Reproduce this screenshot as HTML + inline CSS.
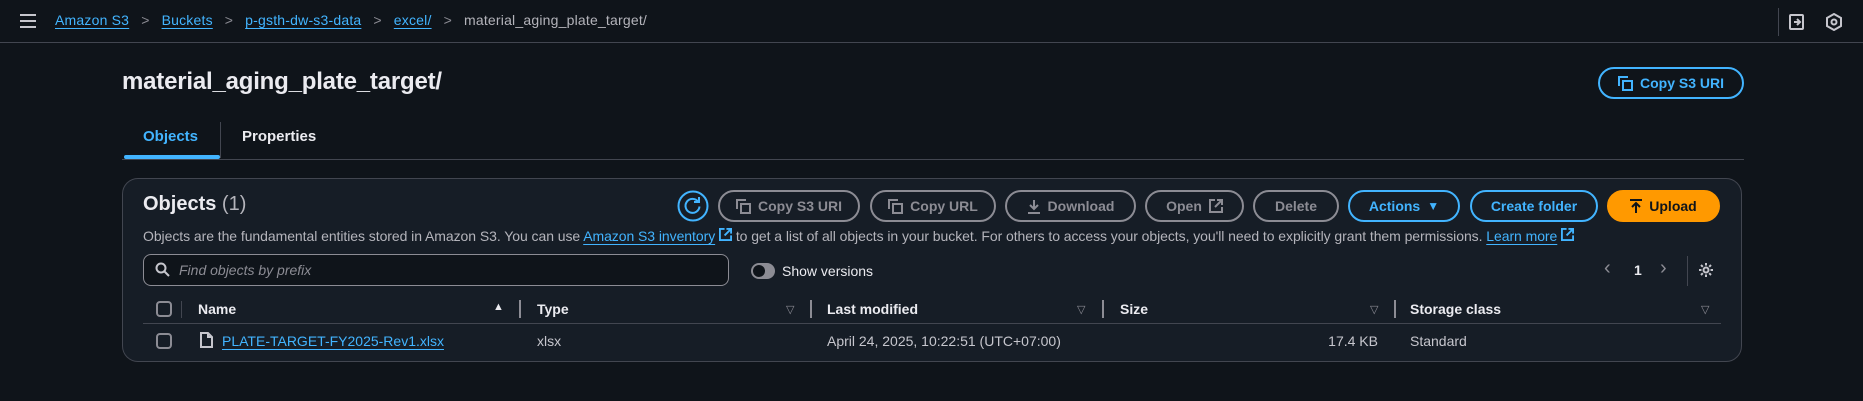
<!DOCTYPE html>
<html><head><meta charset="utf-8"><style>
*{box-sizing:border-box;margin:0;padding:0}
body{width:1863px;height:401px;background:#0f141a;font-family:"Liberation Sans",sans-serif;color:#c6c6cd;position:relative;overflow:hidden;font-size:15px}
.a{position:absolute;white-space:nowrap}
.top{position:absolute;left:0;top:0;width:1863px;height:43px;background:#0f141a;border-bottom:1px solid #424650}
.lnk{color:#42b4ff;text-decoration:underline;text-underline-offset:3px}
.chev{color:#8c8c94;display:inline-block;margin:0 12px}
.btn{position:absolute;top:190px;height:32px;border:2px solid #8c8c94;border-radius:16px;color:#8c8c94;font-weight:bold;font-size:14px;display:flex;align-items:center;justify-content:center;gap:7px}
.blue{border-color:#42b4ff;color:#42b4ff}
.cont{position:absolute;left:122px;top:178px;width:1620px;height:184px;border:1px solid #424650;border-radius:16px;background:#161d26}
.cb{position:absolute;width:16px;height:16px;border:2px solid #8c8c94;border-radius:4px}
.hd{font-weight:bold;color:#ebebf0;font-size:14px}
.div{position:absolute;width:2px;height:18px;background:#8c8c94}
.sort{color:#8c8c94;font-size:11px}
</style></head><body>
<div class="top"></div>
<div class="a" style="left:20px;top:14px;width:16px">
<div style="height:2px;background:#c6c6cd;margin-bottom:4px"></div><div style="height:2px;background:#c6c6cd;margin-bottom:4px"></div><div style="height:2px;background:#c6c6cd"></div></div>
<div class="a" style="left:55px;top:12px;font-size:14px;letter-spacing:0.2px">
<span class="lnk">Amazon S3</span><span class="chev">&gt;</span><span class="lnk">Buckets</span><span class="chev">&gt;</span><span class="lnk">p-gsth-dw-s3-data</span><span class="chev">&gt;</span><span class="lnk">excel/</span><span class="chev">&gt;</span><span style="color:#b4b4bb">material_aging_plate_target/</span></div>
<div class="a" style="left:1778px;top:8px;width:1px;height:28px;background:#424650"></div>
<svg class="a" style="left:1788px;top:13px" width="18" height="18" viewBox="0 0 18 18" fill="none" stroke="#c6c6cd" stroke-width="2"><rect x="2" y="2" width="13" height="14" rx="1"/><path d="M6 9h6M9 6l3 3-3 3"/></svg>
<svg class="a" style="left:1825px;top:13px" width="18" height="18" viewBox="0 0 18 18" fill="none" stroke="#c6c6cd" stroke-width="2"><path d="M9 1l7 4v8l-7 4-7-4V5z"/><circle cx="9" cy="9" r="2.5"/></svg>

<div class="a" style="left:122px;top:68px;font-size:24px;font-weight:bold;color:#ebebf0;letter-spacing:-0.2px">material_aging_plate_target/</div>
<div class="btn blue" style="left:1598px;top:67px;width:146px;height:32px">
<svg width="15" height="15" viewBox="0 0 15 15" fill="none" stroke="#42b4ff" stroke-width="2"><path d="M1 10V1h9"/><rect x="5" y="5" width="9" height="9"/></svg>Copy S3 URI</div>

<div class="a hd" style="left:143px;top:128px;color:#42b4ff;font-size:15px">Objects</div>
<div class="a" style="left:220px;top:122px;width:1px;height:36px;background:#424650"></div>
<div class="a hd" style="left:242px;top:128px;font-size:15px">Properties</div>
<div class="a" style="left:124px;top:155px;width:96px;height:4px;background:#42b4ff;border-radius:2px"></div>
<div class="a" style="left:122px;top:159px;width:1622px;height:1px;background:#424650"></div>

<div class="cont"></div>
<div class="a" style="left:143px;top:193px;font-size:20px;font-weight:bold;color:#ebebf0">Objects <span style="font-weight:normal;color:#b4b4bb">(1)</span></div>
<svg class="a" style="left:677px;top:190px" width="32" height="32" viewBox="0 0 32 32" fill="none" stroke="#42b4ff" stroke-width="2"><circle cx="16" cy="16" r="14.5"/><path d="M21 11.5a7 7 0 1 0 1.5 5"/><path d="M17 9h5v-5" transform="translate(0,3)"/></svg>
<div class="btn" style="left:718px;width:142px"><svg width="15" height="15" viewBox="0 0 15 15" fill="none" stroke="#8c8c94" stroke-width="2"><path d="M1 10V1h9"/><rect x="5" y="5" width="9" height="9"/></svg>Copy S3 URI</div>
<div class="btn" style="left:870px;width:126px"><svg width="15" height="15" viewBox="0 0 15 15" fill="none" stroke="#8c8c94" stroke-width="2"><path d="M1 10V1h9"/><rect x="5" y="5" width="9" height="9"/></svg>Copy URL</div>
<div class="btn" style="left:1005px;width:131px"><svg width="14" height="15" viewBox="0 0 14 15" fill="none" stroke="#8c8c94" stroke-width="2"><path d="M7 1v9M3 6l4 4 4-4M1 14h12"/></svg>Download</div>
<div class="btn" style="left:1145px;width:99px">Open <svg width="14" height="14" viewBox="0 0 14 14" fill="none" stroke="#8c8c94" stroke-width="2"><path d="M6 1H1v12h12V8M8 1h5v5M13 1L6 8"/></svg></div>
<div class="btn" style="left:1253px;width:86px">Delete</div>
<div class="btn blue" style="left:1348px;width:112px">Actions <span style="font-size:12px">▼</span></div>
<div class="btn blue" style="left:1470px;width:128px">Create folder</div>
<div class="btn" style="left:1607px;width:113px;background:#ff9900;border-color:#ff9900;color:#0f141a"><svg width="12" height="15" viewBox="0 0 12 15" fill="none" stroke="#0f141a" stroke-width="2"><path d="M0 1h12M6 14V4M2 8l4-4 4 4"/></svg>Upload</div>

<div class="a" style="left:143px;top:228px;font-size:14px;color:#b4b4bb;letter-spacing:-0.06px">Objects are the fundamental entities stored in Amazon S3. You can use <span class="lnk">Amazon S3 inventory</span> <svg width="13" height="13" viewBox="0 0 14 14" fill="none" stroke="#42b4ff" stroke-width="2"><path d="M6 1H1v12h12V8M8 1h5v5M13 1L6 8"/></svg> to get a list of all objects in your bucket. For others to access your objects, you'll need to explicitly grant them permissions. <span class="lnk">Learn more</span> <svg width="13" height="13" viewBox="0 0 14 14" fill="none" stroke="#42b4ff" stroke-width="2"><path d="M6 1H1v12h12V8M8 1h5v5M13 1L6 8"/></svg></div>

<div class="a" style="left:143px;top:254px;width:586px;height:32px;border:1px solid #8c8c94;border-radius:8px;background:#0f141a"></div>
<svg class="a" style="left:155px;top:262px" width="15" height="15" viewBox="0 0 15 15" fill="none" stroke="#c6c6cd" stroke-width="2"><circle cx="6" cy="6" r="4.5"/><path d="M9.5 9.5L14 14"/></svg>
<div class="a" style="left:179px;top:262px;font-size:14px;font-style:italic;color:#8c8c94">Find objects by prefix</div>
<div class="a" style="left:751px;top:263px;width:24px;height:16px;border-radius:8px;background:#8c8c94"></div>
<div class="a" style="left:753px;top:265px;width:12px;height:12px;border-radius:6px;background:#0f141a"></div>
<div class="a" style="left:782px;top:263px;font-size:14px;color:#ebebf0">Show versions</div>
<div class="a" style="left:1604px;top:257px;font-size:20px;color:#8c8c94">&lsaquo;</div>
<div class="a" style="left:1634px;top:262px;font-size:14px;font-weight:bold;color:#ebebf0">1</div>
<div class="a" style="left:1660px;top:257px;font-size:20px;color:#8c8c94">&rsaquo;</div>
<div class="a" style="left:1687px;top:256px;width:1px;height:30px;background:#424650"></div>
<svg class="a" style="left:1698px;top:262px" width="16" height="16" viewBox="0 0 16 16" fill="none" stroke="#c6c6cd" stroke-width="2"><circle cx="8" cy="8" r="2.5"/><path d="M8 1v2.5M8 12.5V15M1 8h2.5M12.5 8H15M3 3l1.8 1.8M11.2 11.2L13 13M3 13l1.8-1.8M11.2 4.8L13 3"/></svg>

<div class="cb" style="left:156px;top:301px"></div>
<div class="a" style="left:181px;top:301px;width:1px;height:17px;background:#424650"></div>
<div class="a hd" style="left:198px;top:301px">Name</div>
<div class="a" style="left:493px;top:301px;font-size:11px;color:#ebebf0">▲</div>
<div class="div" style="left:519px;top:300px"></div>
<div class="a hd" style="left:537px;top:301px">Type</div>
<div class="a sort" style="left:786px;top:303px">▽</div>
<div class="div" style="left:810px;top:300px"></div>
<div class="a hd" style="left:827px;top:301px">Last modified</div>
<div class="a sort" style="left:1077px;top:303px">▽</div>
<div class="div" style="left:1102px;top:300px"></div>
<div class="a hd" style="left:1120px;top:301px">Size</div>
<div class="a sort" style="left:1370px;top:303px">▽</div>
<div class="div" style="left:1394px;top:300px"></div>
<div class="a hd" style="left:1410px;top:301px">Storage class</div>
<div class="a sort" style="left:1701px;top:303px">▽</div>
<div class="a" style="left:143px;top:323px;width:1578px;height:1px;background:#424650"></div>

<div class="cb" style="left:156px;top:333px"></div>
<svg class="a" style="left:200px;top:332px" width="13" height="16" viewBox="0 0 13 16" fill="none" stroke="#c6c6cd" stroke-width="2"><path d="M1 1h7l4 4v10H1z M8 1v4h4"/></svg>
<div class="a lnk" style="left:222px;top:333px;font-size:14px">PLATE-TARGET-FY2025-Rev1.xlsx</div>
<div class="a" style="left:537px;top:333px;font-size:14px">xlsx</div>
<div class="a" style="left:827px;top:333px;font-size:14px">April 24, 2025, 10:22:51 (UTC+07:00)</div>
<div class="a" style="left:1278px;width:100px;text-align:right;top:333px;font-size:14px">17.4 KB</div>
<div class="a" style="left:1410px;top:333px;font-size:14px">Standard</div>
</body></html>
